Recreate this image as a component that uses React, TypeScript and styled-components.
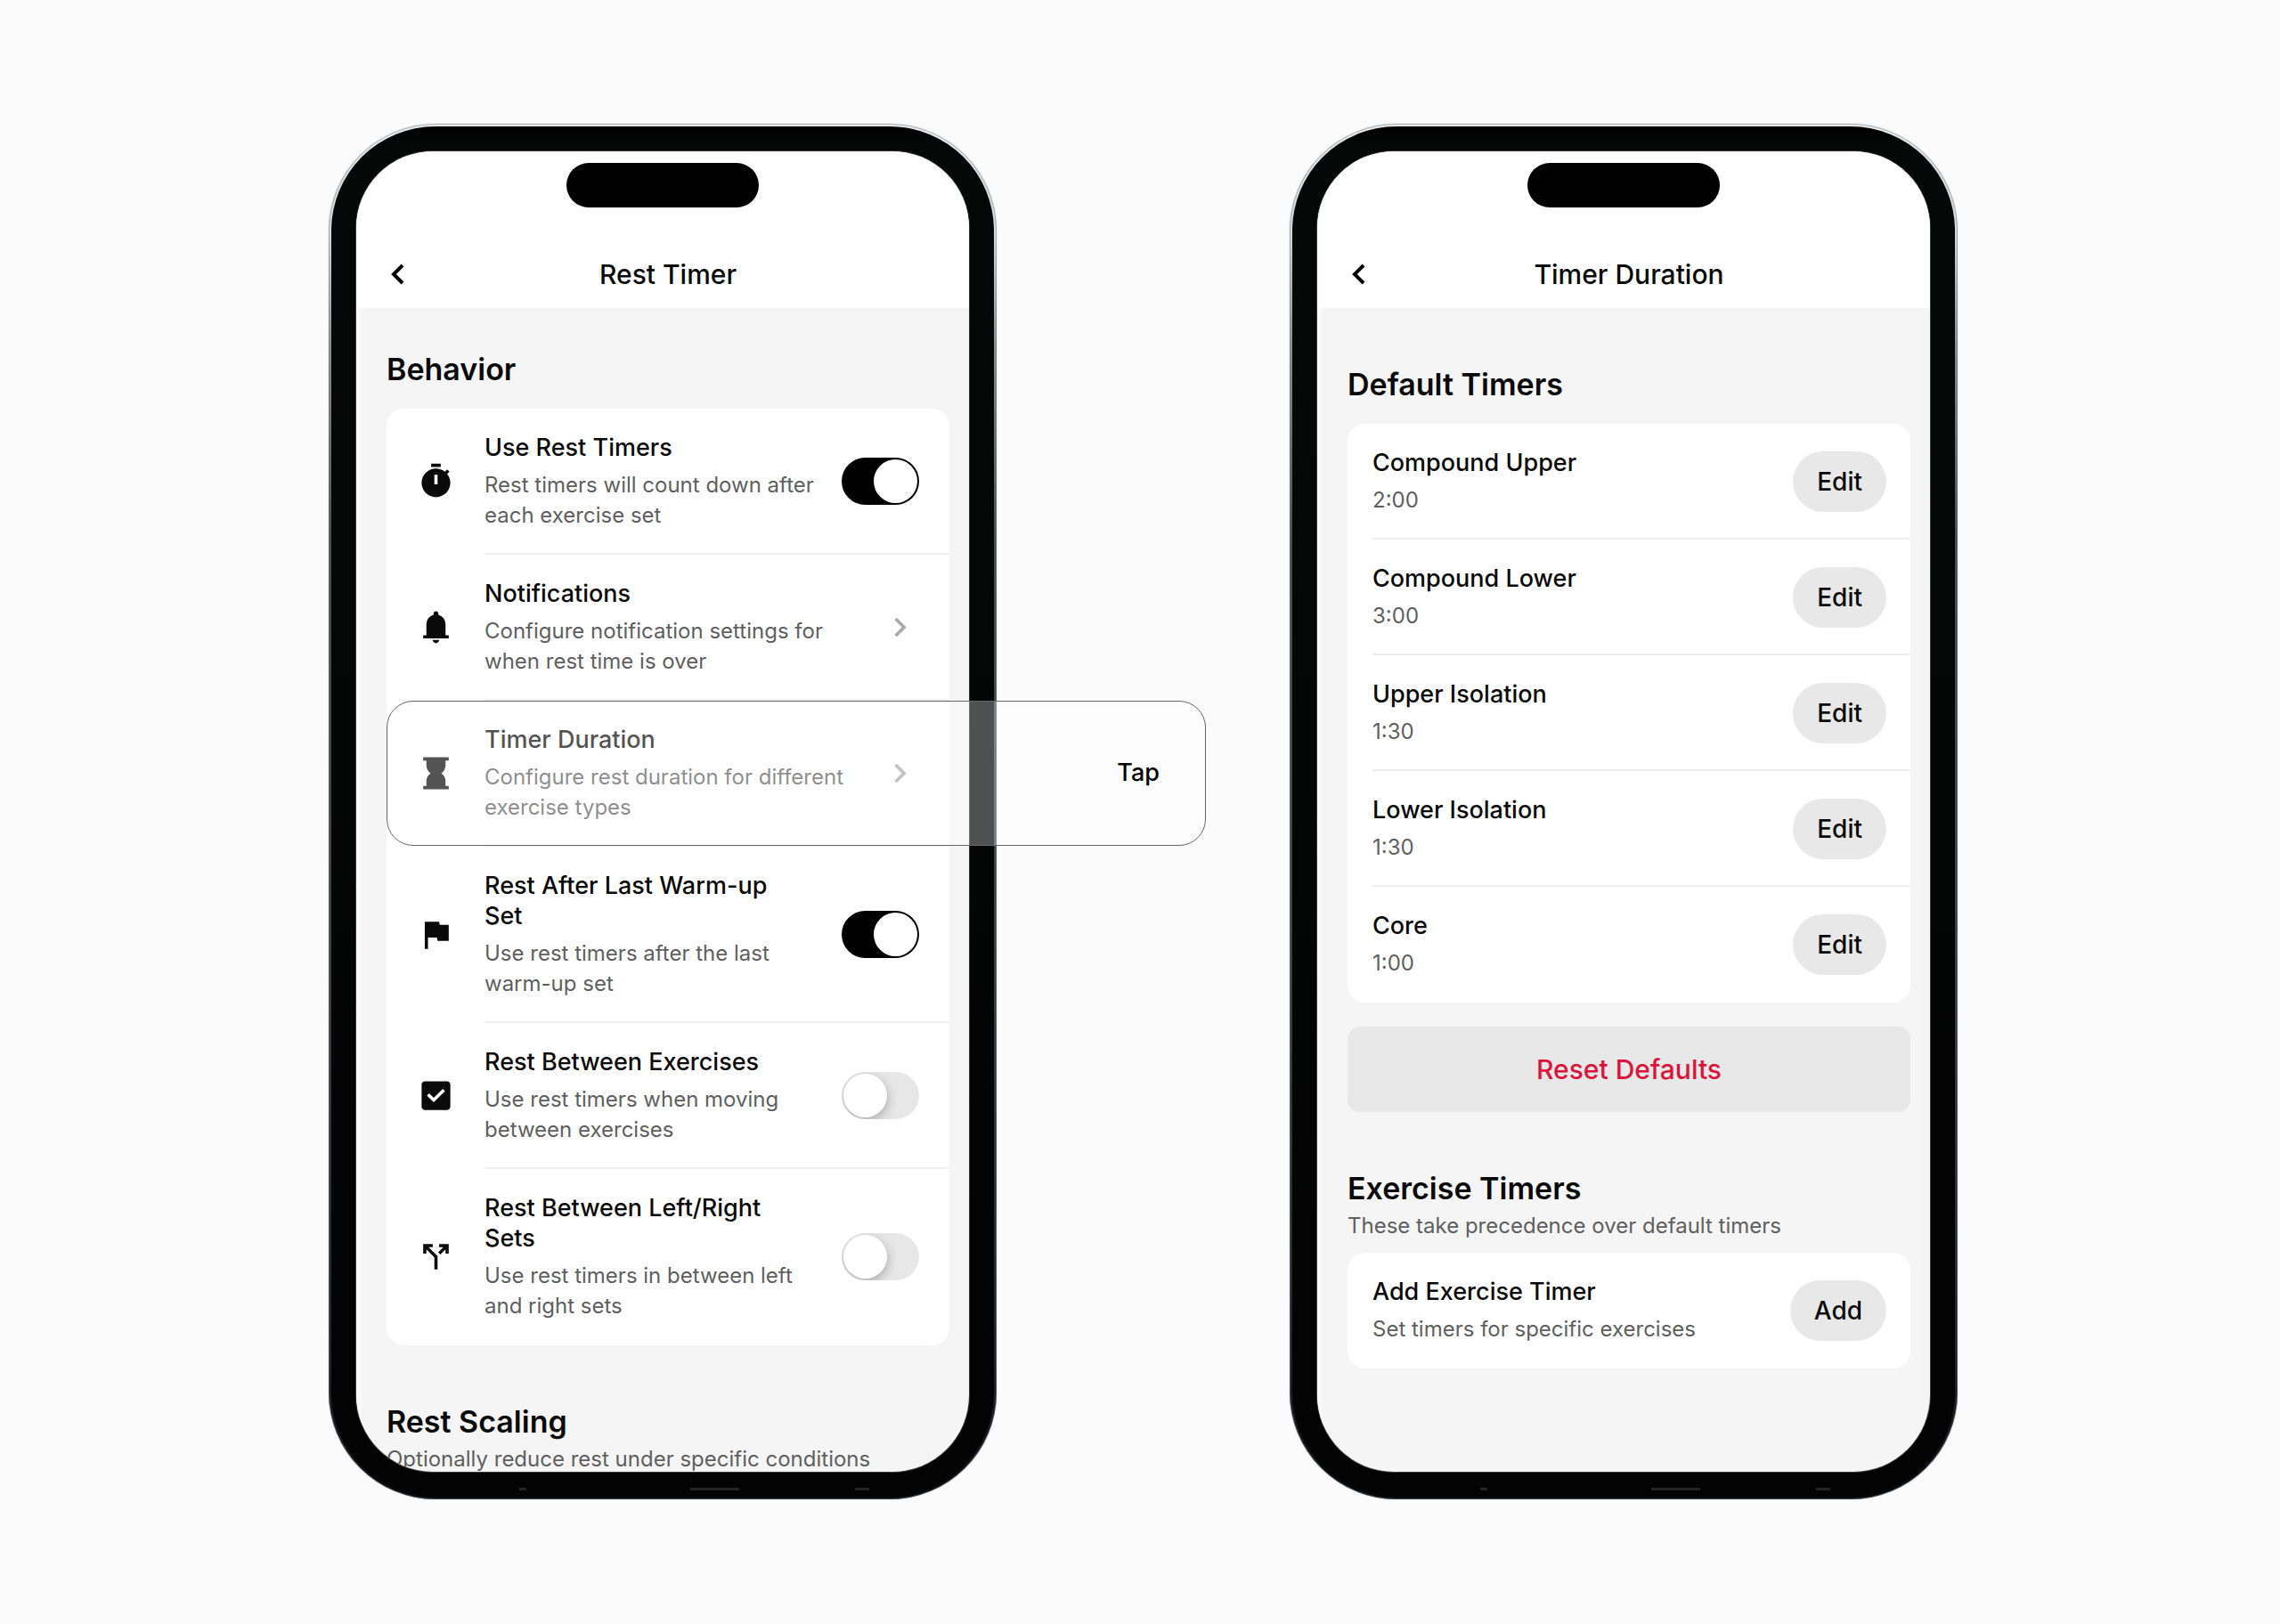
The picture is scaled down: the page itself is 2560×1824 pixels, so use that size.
import React, { useId } from "react";
import styled, { createGlobalStyle } from "styled-components";

const GlobalStyle = createGlobalStyle`
  *, *::before, *::after { box-sizing: border-box; }
  body {
    margin: 0;
    background: #fbfbfb;
    color: #0a0a0a;
    font-family: Inter, "Liberation Sans", sans-serif;
    font-size: 27px;
    line-height: 34px;
  }
  h1, h2, p, ul { margin: 0; padding: 0; }
  ul { list-style: none; }
  button { font: inherit; color: inherit; border: 0; cursor: pointer; }
  a { color: inherit; text-decoration: none; }
`;

const Stage = styled.main`
  min-height: 100vh;
  padding: 0 0 2px 7px;
  display: flex;
  justify-content: center;
  align-items: center;
  gap: 329px;
`;

const Slot = styled.div`
  position: relative;
  flex: 0 0 750px;
`;

const Rim = styled.div`
  padding: 3px;
  border-radius: 120px;
  background: linear-gradient(#e6e9ec 0%, #d3d7db 8%, #8a8f95 16%, #4a4e54 30%, #3c4046 60%, #202226 90%, #08090a 100%);
  box-shadow: inset 0 0 0 1px rgba(120, 124, 130, 0.5), 0 0 2px rgba(0, 0, 0, 0.2);
`;

const Bezel = styled.div`
  padding: 28px;
  border-radius: 117px;
  background:
    linear-gradient(#242424, #242424) 211px calc(100% - 7px) / 8px 3px no-repeat,
    linear-gradient(#242424, #242424) 403px calc(100% - 7px) / 55px 3px no-repeat,
    linear-gradient(#242424, #242424) 588px calc(100% - 7px) / 16px 3px no-repeat,
    linear-gradient(#000 0, #060707 24px, #030303 100%);
`;

const Screen = styled.section`
  height: 1483px;
  overflow: hidden;
  border-radius: 86px;
  background: #f5f5f5;
  box-shadow: 0 0 0 1px #3a3a3a;
`;

const StatusBar = styled.div`
  height: 101px;
  padding-top: 13px;
  display: flex;
  justify-content: center;
  align-items: flex-start;
  background: #fff;
`;

const Island = styled.div`
  width: 216px;
  height: 50px;
  border-radius: 25px;
  background: #000;
`;

const NavBar = styled.header`
  height: 75px;
  padding: 0 26px 0 38px;
  display: grid;
  grid-template-columns: 40px 1fr 40px;
  align-items: center;
  background: #fff;
`;

const BackButton = styled.button`
  padding: 8px 0;
  display: flex;
  background: none;
`;

const ScreenTitle = styled.h1`
  font-size: 30px;
  line-height: 42px;
  font-weight: 500;
  text-align: center;
`;

const Content = styled.div<{ $top: number }>`
  height: 100%;
  padding: ${(p) => p.$top}px 22px 0 28px;
  border-left: 6px solid #f9f9f9;
`;

const SectionHead = styled.div<{ $gap: number; $top?: number }>`
  margin-top: ${(p) => p.$top ?? 0}px;
  margin-bottom: ${(p) => p.$gap}px;
  display: grid;
  gap: 4px;
`;

const SectionTitle = styled.h2`
  font-size: 34px;
  line-height: 42px;
  font-weight: 600;
`;

const Muted = styled.p`
  font-size: 24px;
  color: #5f5f5f;
`;

const Card = styled.ul`
  border-radius: 20px;
  background: #fff;
`;

const Item = styled.li`
  display: flex;
`;

const IconCell = styled.span`
  flex: 0 0 110px;
  display: flex;
  justify-content: center;
  align-items: center;
`;

const Icon = styled.svg`
  width: 43px;
  height: 43px;
  flex: none;
  fill: currentColor;
`;

const Chevron = styled(Icon)`
  color: #a8a8a8;
`;

const rowBody = `
  flex: 1;
  display: flex;
  align-items: center;
  justify-content: space-between;
  gap: 27px;
  li:not(:last-child) > & { box-shadow: inset 0 -2px 0 #eeeeee; }
`;

const SettingLabel = styled.label`
  ${rowBody}
  padding: 27px 34px 27px 0;
  cursor: pointer;
`;

const SettingLink = styled.a`
  ${rowBody}
  padding: 27px 34px 27px 0;
`;

const TimerBody = styled.div`
  ${rowBody}
  margin-left: 28px;
  padding: 27px 27px 27px 0;
`;

const Texts = styled.span`
  display: grid;
  gap: 8px;
`;

const ItemTitle = styled.span`
  padding-right: 20px;
  font-weight: 500;
`;

const ItemText = styled(Muted).attrs({ as: "span" })``;

const Switch = styled.input`
  appearance: none;
  flex: none;
  width: 87px;
  height: 53px;
  margin: 0;
  padding: 2px;
  display: flex;
  border-radius: 27px;
  background: #e7e7e7;
  overflow: hidden;
  cursor: pointer;

  &::before {
    content: "";
    width: 49px;
    height: 49px;
    border-radius: 50%;
    background: #fff;
    box-shadow: 1px 4px 12px rgba(0, 0, 0, 0.25);
  }

  &:checked {
    justify-content: flex-end;
    background: #000;
  }
`;

const PillButton = styled.button`
  flex: none;
  height: 68px;
  padding: 0 27px;
  border-radius: 34px;
  background: #e8e8e8;
  font-size: 28px;
  font-weight: 500;
`;

const ResetButton = styled.button`
  width: 100%;
  height: 96px;
  margin-top: 27px;
  border-radius: 14px;
  background: #e8e8e8;
  color: #dc143c;
  font-size: 30px;
  font-weight: 500;
`;

const Callout = styled.div`
  position: absolute;
  top: 648px;
  left: 65px;
  width: 920px;
  height: 163px;
  padding-right: 51px;
  display: flex;
  align-items: center;
  justify-content: flex-end;
  border: 1px solid #666;
  border-radius: 30px;
  background: rgba(255, 255, 255, 0.3);
  color: #000;
  font-weight: 500;
  pointer-events: none;
`;

const paths = {
  timer:
    "M15 1H9v2h6V1zm-4 13h2V8h-2v6zm8.03-6.61 1.42-1.42c-.43-.51-.9-.99-1.41-1.41l-1.42 1.42C16.07 4.74 14.12 4 12 4c-4.97 0-9 4.03-9 9s4.02 9 9 9 9-4.03 9-9c0-2.12-.74-4.07-1.97-5.61z",
  bell:
    "M4 19v-2h2v-7q0-2.075 1.25-3.687T10.5 4.2v-.7q0-.625.438-1.062T12 2t1.063.438T13.5 3.5v.7q2 .5 3.25 2.113T18 10v7h2v2zm8 3q-.825 0-1.412-.587T10 20h4q0 .825-.587 1.413T12 22",
  hourglass:
    "M4 22v-2h2v-3q0-1.525.713-2.863T8.7 12q-1.275-.8-1.987-2.137T6 7V4H4V2h16v2h-2v3q0 1.525-.712 2.863T15.3 12q1.275.8 1.988 2.138T18 17v3h2v2z",
  flag: "M5 21V4h9l.4 2H20v10h-7l-.4-2H7v7z",
  check:
    "M5 21q-.825 0-1.412-.587T3 19V5q0-.825.588-1.412T5 3h14q.825 0 1.413.588T21 5v14q0 .825-.587 1.413T19 21zM10.6 16.2l7.05-7.05-1.4-1.4-5.65 5.65-2.85-2.85-1.4 1.4z",
  split:
    "M11 20v-7.575l-5-5V10H4V4h6v2H7.4l5.6 5.6V20zM14.825 10.6 13.4 9.175 16.575 6H14V4h6v6h-2V7.425z",
  chevron: "M10 6 8.59 7.41 13.17 12l-4.58 4.59L10 18l6-6z",
};

const Glyph = ({ name }: { name: keyof typeof paths }) => (
  <Icon viewBox="0 0 24 24" aria-hidden="true">
    <path fillRule="evenodd" d={paths[name]} />
  </Icon>
);

type Setting = {
  icon: keyof typeof paths;
  title: string;
  text: string;
  on?: boolean;
};

const settings: Setting[] = [
  { icon: "timer", title: "Use Rest Timers", text: "Rest timers will count down after each exercise set", on: true },
  { icon: "bell", title: "Notifications", text: "Configure notification settings for when rest time is over" },
  { icon: "hourglass", title: "Timer Duration", text: "Configure rest duration for different exercise types" },
  { icon: "flag", title: "Rest After Last Warm-up Set", text: "Use rest timers after the last warm-up set", on: true },
  { icon: "check", title: "Rest Between Exercises", text: "Use rest timers when moving between exercises", on: false },
  { icon: "split", title: "Rest Between Left/Right Sets", text: "Use rest timers in between left and right sets", on: false },
];

const timers = [
  ["Compound Upper", "2:00"],
  ["Compound Lower", "3:00"],
  ["Upper Isolation", "1:30"],
  ["Lower Isolation", "1:30"],
  ["Core", "1:00"],
];

function SettingRow({ icon, title, text, on }: Setting) {
  const id = useId();
  const texts = (
    <Texts>
      <ItemTitle>{title}</ItemTitle>
      <ItemText>{text}</ItemText>
    </Texts>
  );
  return (
    <Item>
      <IconCell>
        <Glyph name={icon} />
      </IconCell>
      {on === undefined ? (
        <SettingLink href="#">
          {texts}
          <Chevron viewBox="0 0 24 24" aria-hidden="true">
            <path d={paths.chevron} />
          </Chevron>
        </SettingLink>
      ) : (
        <SettingLabel htmlFor={id}>
          {texts}
          <Switch id={id} type="checkbox" role="switch" defaultChecked={on} />
        </SettingLabel>
      )}
    </Item>
  );
}

function TimerRow({ title, text, action }: { title: string; text: string; action: string }) {
  return (
    <Item>
      <TimerBody>
        <Texts>
          <ItemTitle>{title}</ItemTitle>
          <ItemText>{text}</ItemText>
        </Texts>
        <PillButton type="button">{action}</PillButton>
      </TimerBody>
    </Item>
  );
}

function Phone({ title, top, children }: { title: string; top: number; children: React.ReactNode }) {
  return (
    <Rim>
      <Bezel>
        <Screen>
          <StatusBar>
            <Island />
          </StatusBar>
          <NavBar>
            <BackButton type="button" aria-label="Back">
              <svg width="16" height="24" viewBox="0 0 16 24" fill="none" stroke="#000" strokeWidth="4" aria-hidden="true">
                <path d="M14 2 4 12l10 10" />
              </svg>
            </BackButton>
            <ScreenTitle>{title}</ScreenTitle>
          </NavBar>
          <Content $top={top}>{children}</Content>
        </Screen>
      </Bezel>
    </Rim>
  );
}

export default function App() {
  return (
    <>
      <GlobalStyle />
      <Stage>
        <Slot>
          <Phone title="Rest Timer" top={48}>
            <SectionHead $gap={23}>
              <SectionTitle>Behavior</SectionTitle>
            </SectionHead>
            <Card>
              {settings.map((s) => (
                <SettingRow key={s.title} {...s} />
              ))}
            </Card>
            <SectionHead $top={65} $gap={13}>
              <SectionTitle>Rest Scaling</SectionTitle>
              <Muted>Optionally reduce rest under specific conditions</Muted>
            </SectionHead>
          </Phone>
          <Callout>Tap</Callout>
        </Slot>
        <Slot>
          <Phone title="Timer Duration" top={65}>
            <SectionHead $gap={23}>
              <SectionTitle>Default Timers</SectionTitle>
            </SectionHead>
            <Card>
              {timers.map(([title, text]) => (
                <TimerRow key={title} title={title} text={text} action="Edit" />
              ))}
            </Card>
            <ResetButton type="button">Reset Defaults</ResetButton>
            <SectionHead $top={65} $gap={13}>
              <SectionTitle>Exercise Timers</SectionTitle>
              <Muted>These take precedence over default timers</Muted>
            </SectionHead>
            <Card>
              <TimerRow title="Add Exercise Timer" text="Set timers for specific exercises" action="Add" />
            </Card>
          </Phone>
        </Slot>
      </Stage>
    </>
  );
}
